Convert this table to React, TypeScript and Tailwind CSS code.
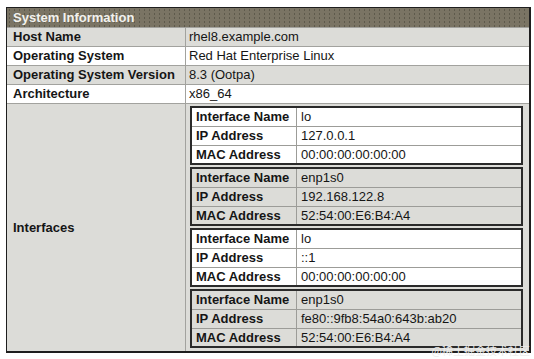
import React from "react";

const mainRows: { label: string; value: string; gray: boolean }[] = [
  { label: "Host Name", value: "rhel8.example.com", gray: true },
  { label: "Operating System", value: "Red Hat Enterprise Linux", gray: false },
  { label: "Operating System Version", value: "8.3 (Ootpa)", gray: true },
  { label: "Architecture", value: "x86_64", gray: false },
];

const ifaces: { name: string; ip: string; mac: string; gray: boolean }[] = [
  { name: "lo", ip: "127.0.0.1", mac: "00:00:00:00:00:00", gray: false },
  { name: "enp1s0", ip: "192.168.122.8", mac: "52:54:00:E6:B4:A4", gray: true },
  { name: "lo", ip: "::1", mac: "00:00:00:00:00:00", gray: false },
  { name: "enp1s0", ip: "fe80::9fb8:54a0:643b:ab20", mac: "52:54:00:E6:B4:A4", gray: true },
];

function Iface({ name, ip, mac, gray }: { name: string; ip: string; mac: string; gray: boolean }) {
  const bg = gray ? "bg-[#dcdcd8]" : "bg-white";
  const rows: [string, string, string][] = [
    ["Interface Name", name, "h-[18px]"],
    ["IP Address", ip, "h-[18px]"],
    ["MAC Address", mac, "h-[17px]"],
  ];
  return (
    <div className="w-[333px] border-2 border-[#2a2a2a] bg-[#9c9c98]">
      <div className="grid grid-cols-[104px_1fr] gap-px">
        {rows.map(([l, v, h]) => (
          <React.Fragment key={l}>
            <div className={`${bg} ${h} pl-[4px] flex items-center font-bold text-[13px] text-[#151515]`}>{l}</div>
            <div className={`${bg} ${h} pl-[4px] flex items-center text-[13px] text-[#151515]`}>{v}</div>
          </React.Fragment>
        ))}
      </div>
    </div>
  );
}

export default function App() {
  return (
    <div className="relative w-[534px] h-[359px] bg-white font-['Liberation_Sans',Arial,sans-serif]">
      <div className="pt-[7px] pl-[6px]">
        <div className="w-[525px] border border-[#1e1e1e] border-r-2 border-b-2 bg-[#a2a29e]">
          <div className="h-[19px] flex items-center pl-[6px] bg-[#7a7464] bg-[radial-gradient(#5e5a4c_0.8px,transparent_1px)] bg-[length:5px_4px] text-[13px] font-bold text-[#f2f2ee]">
            System Information
          </div>
          <div className="grid grid-cols-[178px_1fr] gap-px pt-px">
            {mainRows.map((r) => (
              <React.Fragment key={r.label}>
                <div className={`${r.gray ? "bg-[#dcdcd8]" : "bg-white"} h-[18px] pl-[6px] flex items-center font-bold text-[13px] text-[#151515]`}>{r.label}</div>
                <div className={`${r.gray ? "bg-[#dcdcd8]" : "bg-white"} h-[18px] pl-[3px] flex items-center text-[13px] text-[#151515]`}>{r.value}</div>
              </React.Fragment>
            ))}
            <div className="bg-[#dcdcd8] pl-[6px] flex items-center font-bold text-[13px] text-[#151515]">Interfaces</div>
            <div className="bg-[#dcdcd8] pl-[4px] pt-[2px] pb-[3px] flex flex-col gap-[2px]">
              {ifaces.map((f, i) => (
                <Iface key={i} {...f} />
              ))}
            </div>
          </div>
        </div>
      </div>
      <div className="absolute right-[4px] bottom-[1px] text-[11px] text-[#ececec] font-['Noto_Sans_CJK_SC',sans-serif] pointer-events-none">
        @稀土掘金技术社区
      </div>
    </div>
  );
}
